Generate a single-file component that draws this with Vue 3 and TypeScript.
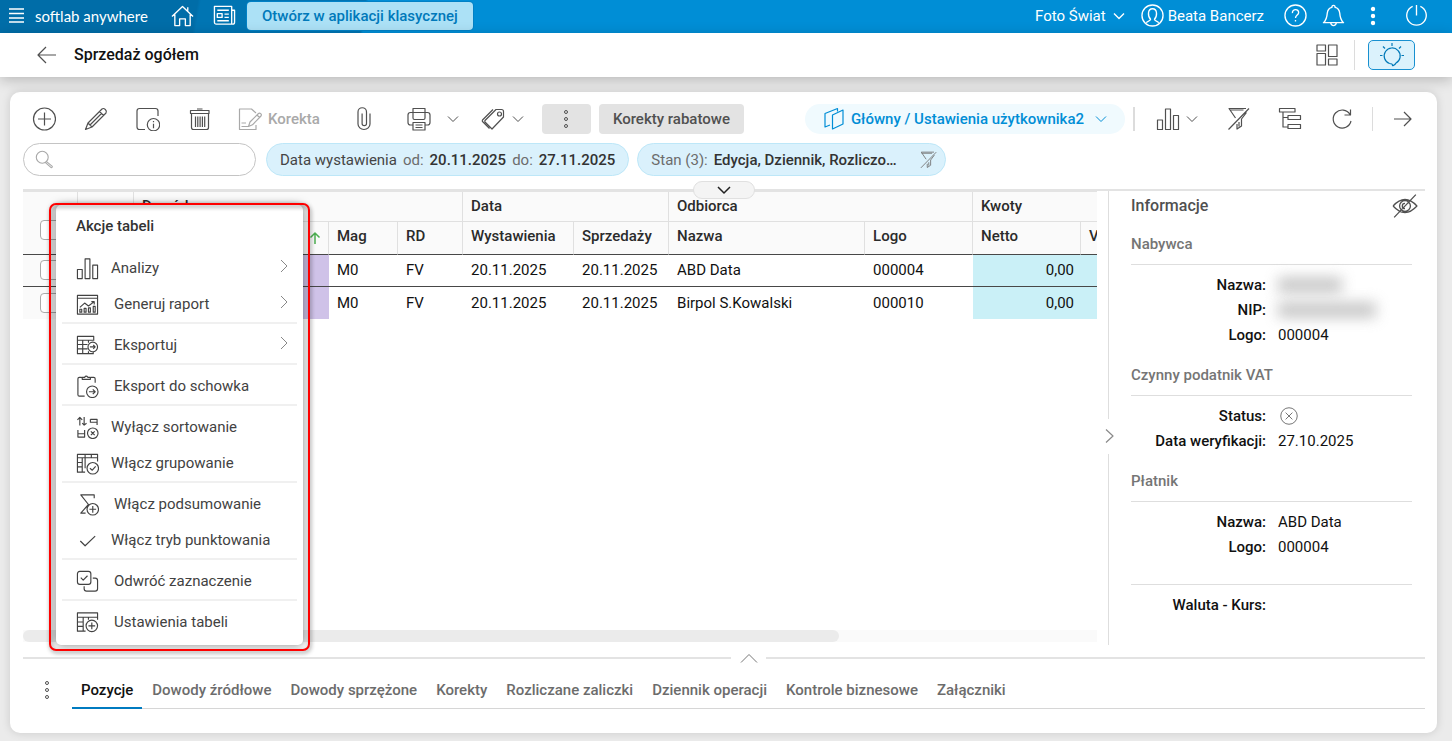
<script setup lang="ts">
import { ref } from 'vue'

interface MenuItem {
  label: string
  icon: string
  wide?: boolean
  submenu?: boolean
  divided?: boolean
}

interface InvoiceRow {
  store: string
  kind: string
  issued: string
  sold: string
  name: string
  logo: string
  net: string
}

const icons: Record<string, string> = {
  burger: 'M1 2h15M1 6.500h15M1 11h15M1 15h15',
  home: 'M1 13L12 2.500L23 13M4 11V22.500H9V15.500H15V22.500H20V11M17.500 7V3.500',
  news: 'M1.500 2.500H19.500V21H3.500Q1.500 21 1.500 19zM19.500 6.500H22.500V19Q22.500 21 20.500 21H18M4.500 6.500H16.500M4.500 10H9.500V14H4.500zM12 10.500H16.500M12 14H16.500M4.500 17.500H16.500',
  user: 'M12 1a11 11 0 1 0 0 22a11 11 0 0 0 0-22M5.500 19.500C6.500 17.500 10 18 10 16C7 13 6.500 5 12 5S17 13 14 16C14 18 17.500 17.500 18.500 19.500',
  help: 'M12 1a11 11 0 1 0 0 22a11 11 0 0 0 0-22M8.800 9.500C8.500 4.800 15.500 4.800 15.300 9C15.200 11.500 12 11.500 12 14.500M12 16.800v1.500',
  bell: 'M1.500 19.500Q5 16.500 5.500 9.500Q6.200 4.500 10.300 3.600Q10.300 1.500 12 1.500T13.700 3.600Q17.800 4.500 18.500 9.500Q19 16.500 22.500 19.500zM9 19.800Q9.500 22.500 12 22.500T15 19.800',
  power: 'M12 1v11M8 2.500A10.200 10.200 0 1 0 16 2.500',
  back: 'M21 12H3M11 4L3 12L11 20',
  forward: 'M3 12H20M13 5L20 12L13 19',
  layout: 'M2 2H10.500V8H2zM2 10.500H10.500V22H2zM13.500 2H22V13.500H13.500zM13.500 16H22V22H13.500z',
  bulb: 'M9.500 20.500Q13 20.500 12.500 23M12.500 23Q15.500 21.500 16 20A8 8 0 1 0 9.500 20.500M12 0V3M3 3.500L5 5.500M21 3.500L19 5.500M0 12.500H2.500M21.500 12.500H24',
  plus: 'M12.500 1a11 11 0 1 0 0 22a11 11 0 0 0 0-22M12.500 5.500v13M6 12h13',
  pencil: 'M1.500 22.500L4 16L18 2Q19.500 .800 21.300 2.500T22 6L8 20zM15.500 4.500L19.500 8.500M4 16L8 20M6 18L17.500 6.500',
  info: 'M22 9V4Q22 1.500 19.500 1.500H3.500Q1 1.500 1 4V20Q1 22.500 3.500 22.500H9M17.500 11.500a6.200 6.200 0 1 0 0 12.400a6.200 6.200 0 0 0 0-12.400M17.500 16.800v4.500M17.500 14v1.300',
  trash: 'M2.500 3.500H21V6.500H2.500zM9 2H14.500M3.500 6.500H20.500V20.500Q20.500 22.500 18.500 22.500H5.500Q3.500 22.500 3.500 20.500zM7.500 9.500V20M9.800 9.500V20M12.100 9.500V20M14.400 9.500V20M16.700 9.500V20',
  fix: 'M18 6L13.500 2H1.500V22.500H18V18M3.500 16H8M3.500 19.500H10M10.500 19.500L12 15L20.500 6.500Q21.500 5.500 22.700 6.600T23 9L14.500 17.800zM19 8L21.500 10.500',
  clip: 'M18 6.500V17a6 5.500 0 0 1-12 0V5a4 4 0 0 1 8.500 0V16.500a2.200 2.200 0 0 1-4.400 0V6.500',
  print: 'M6 5.500V1.500H18V5.500M6 5.500H3.500Q1 5.500 1 8V15.500Q1 18 3.500 18H6M18 5.500H20.500Q23 5.500 23 8V15.500Q23 18 20.500 18H18M6 5.500H18V11Q18 12.500 16.500 12.500H7.500Q6 12.500 6 11zM6 15.500H18V23H6zM8.500 18H15.500M8.500 20.500H15.500',
  tag: 'M15 2.500H20.500Q22.500 2.500 22.500 4.500V10L11 22L4 15Q3.500 14 4 13.500zM12 2.500L1.500 13Q1 14 1.500 14.500L8.500 21.500M18.500 5a2 2 0 1 0 0 4a2 2 0 0 0 0-4',
  views: 'M10.500 8L21 3V17L10.500 22zM15.500 4.500V1.500L3 6.500V20L8 18',
  bars: 'M1.500 13H6.500V22.500H1.500zM9.500 2H14.500V22.500H9.500zM17.500 8.500H22.500V22.500H17.500z',
  nofilter: 'M2.500 22.500L23 1.500M20 1.500H3L9.500 11M3.500 3H17.500M20.500 5.500L15.500 12V19L11 22V17M13 15V19.500',
  tree: 'M1.500 1.500H17V5H1.500zM5 5V20H10M5 10.500H10M10 8.500H22.500V12.500H10zM10 17.500H22.500V21.500H10z',
  refresh: 'M20 7.500A9 9 0 1 0 21 14M20.500 2.500V8H14.500',
  search: 'M9 2.500a6.500 6.500 0 1 0 0 13a6.500 6.500 0 0 0 0-13M13.700 13.700L20 19Q20.200 20.300 19 20.500L12.500 14.800',
  hide: 'M1 12Q12 0 23 12Q12 24 1 12M12 7a5 5 0 1 0 0 10a5 5 0 0 0 0-10M12 9.500a2.500 2.500 0 0 0 0 5M2 22.500L22 1.500',
  report: 'M1.500 2.500H22.500V22H1.500zM1.500 5.500H22.500M4 15L9 10.500L13 13.500L19 9M16 9H19V12M4 17h2v3h-2zM8.500 16h2v4h-2zM13 15.500h2v4.500h-2zM18 14h2v6h-2z',
  exportTable: 'M18.500 7V2.500H1.500V20.500H18V18.500M1.500 6.500H18.500M1.500 11H12M1.500 15.500H12M7 6.500V20.500M13 6.500V9M13 18V20.500M17.500 8.500a5 5 0 1 0 0 10a5 5 0 0 0 0-10M14.500 13.500H20M18 11.500L20 13.500L18 15.500',
  clipboard: 'M6 2.500H3.500Q2 2.500 2 4V20.500Q2 22 3.500 22H9M15.500 2.500H18.500Q20 2.500 20 4V8M6.500 4.500V2.500H9Q10.500 0 12.500 2.500H15V4.500zM17 11.500a6 6 0 1 0 0 12a6 6 0 0 0 0-12M13.500 17.500H20M17.500 15L20 17.500L17.500 20',
  nosort: 'M4 10V1.500M1.500 4L4 1.500L6.500 4M8.500 1V9.500M6.500 7.500L8.500 9.500L11 7.500M15 3.500H22V9.500M15 3.500V6.500H22M2 14.500V22H9V14.500M2 18.500H9M17.500 12.500a5.500 5.500 0 1 0 0 11a5.500 5.500 0 0 0 0-11M15.500 16L19.500 20M19.500 16L15.500 20',
  group: 'M22.500 10V2.500H1.500V21H9.500M1.500 6H22.500M6.500 6V21M1.500 11H6.500M1.500 15.500H6.500M9.500 6V17M9.500 2.500V6M16 2.500V6M17.500 11a6 6 0 1 0 0 12a6 6 0 0 0 0-12M14.500 17L17 19L20.500 15',
  sum: 'M19 5.500V2H5L13 12L5 21H10M17.500 11a6 6 0 1 0 0 12a6 6 0 0 0 0-12M17.500 13.500V20.500M14 17H21',
  check: 'M4.500 12.500L9.500 17.500L20 7.500',
  invert: 'M4 1.500H13Q15.500 1.500 15.500 4V12.500Q15.500 15 13 15H4Q1.500 15 1.500 12.500V4Q1.500 1.500 4 1.500M5 8L7.500 10.500L12 6M17.500 8.500H20Q22.500 8.500 22.500 11V19.500Q22.500 22 20 22H11Q8.500 22 8.500 19.500V17',
  tableSettings: 'M22.500 9V2H1.500V21H10M1.500 6.500H22.500M1.500 11.500H8M1.500 16H8M7.500 6.500V21M13 6.500V9M16.500 9.500a6 6 0 1 0 0 12a6 6 0 0 0 0-12M16.500 12V19M13 15.500H20',
  cross: 'M12 1a11 11 0 1 0 0 22a11 11 0 0 0 0-22M7.500 7.500l9 9M16.500 7.500l-9 9',
}

const menu: MenuItem[] = [
  { label: 'Analizy', icon: 'bars', submenu: true },
  { label: 'Generuj raport', icon: 'report', submenu: true, wide: true, divided: true },
  { label: 'Eksportuj', icon: 'exportTable', submenu: true, wide: true, divided: true },
  { label: 'Eksport do schowka', icon: 'clipboard', wide: true, divided: true },
  { label: 'Wyłącz sortowanie', icon: 'nosort' },
  { label: 'Włącz grupowanie', icon: 'group', divided: true },
  { label: 'Włącz podsumowanie', icon: 'sum', wide: true },
  { label: 'Włącz tryb punktowania', icon: 'check', divided: true },
  { label: 'Odwróć zaznaczenie', icon: 'invert', wide: true, divided: true },
  { label: 'Ustawienia tabeli', icon: 'tableSettings', wide: true },
]

const rows: InvoiceRow[] = [
  { store: 'M0', kind: 'FV', issued: '20.11.2025', sold: '20.11.2025', name: 'ABD Data', logo: '000004', net: '0,00' },
  { store: 'M0', kind: 'FV', issued: '20.11.2025', sold: '20.11.2025', name: 'Birpol S.Kowalski', logo: '000010', net: '0,00' },
]

const tabs = [
  'Pozycje', 'Dowody źródłowe', 'Dowody sprzężone', 'Korekty',
  'Rozliczane zaliczki', 'Dziennik operacji', 'Kontrole biznesowe', 'Załączniki',
]
const activeTab = ref('Pozycje')
const query = ref('')
</script>

<template>
  <div class="page">
    <header class="topbar">
      <button class="top-btn burger" aria-label="Menu"><svg viewBox="0 0 17 17"><path :d="icons.burger" /></svg></button>
      <span class="brand">softlab anywhere</span>
      <button class="top-btn home" aria-label="Start"><svg viewBox="0 0 24 24"><path :d="icons.home" /></svg></button>
      <button class="top-btn news" aria-label="Aktualności"><svg viewBox="0 0 24 24"><path :d="icons.news" /></svg></button>
      <button class="classic">Otwórz w aplikacji klasycznej</button>
      <div class="top-right">
        <button class="top-btn company">Foto Świat<svg class="chev" viewBox="0 0 12 12"><path d="M1 3.500l5 5 5-5" /></svg></button>
        <button class="top-btn account"><svg viewBox="0 0 24 24"><path :d="icons.user" /></svg>Beata Bancerz</button>
        <button class="top-btn help" aria-label="Pomoc"><svg viewBox="0 0 24 24"><path :d="icons.help" /></svg></button>
        <button class="top-btn bell" aria-label="Powiadomienia"><svg viewBox="0 0 24 24"><path :d="icons.bell" /></svg></button>
        <button class="top-btn more" aria-label="Więcej"><svg class="dots solid" viewBox="0 0 6 20"><circle cx="3" cy="3" r="1.500" /><circle cx="3" cy="10" r="1.500" /><circle cx="3" cy="17" r="1.500" /></svg></button>
        <button class="top-btn" aria-label="Wyloguj"><svg viewBox="0 0 24 24"><path :d="icons.power" /></svg></button>
      </div>
    </header>

    <div class="titlebar">
      <button class="icon-btn back" aria-label="Wstecz"><svg viewBox="0 0 24 24"><path :d="icons.back" /></svg></button>
      <h1>Sprzedaż ogółem</h1>
      <button class="icon-btn layout" aria-label="Układ"><svg viewBox="0 0 24 24"><path :d="icons.layout" /></svg></button>
      <span class="sep title-sep"></span>
      <button class="hint" aria-label="Podpowiedzi"><svg viewBox="0 0 24 24"><path :d="icons.bulb" /></svg></button>
    </div>

    <main class="card">
      <div class="toolbar">
        <div class="tools">
          <button class="icon-btn" aria-label="Dodaj"><svg viewBox="0 0 24 24"><path :d="icons.plus" /></svg></button>
          <button class="icon-btn" aria-label="Edytuj"><svg viewBox="0 0 24 24"><path :d="icons.pencil" /></svg></button>
          <button class="icon-btn" aria-label="Podgląd"><svg viewBox="0 0 24 24"><path :d="icons.info" /></svg></button>
          <button class="icon-btn" aria-label="Usuń"><svg viewBox="0 0 24 24"><path :d="icons.trash" /></svg></button>
        </div>
        <button class="icon-btn fix" disabled><svg viewBox="0 0 24 24"><path :d="icons.fix" /></svg>Korekta</button>
        <button class="icon-btn clip" aria-label="Załącznik"><svg viewBox="0 0 24 24"><path :d="icons.clip" /></svg></button>
        <button class="icon-btn split print" aria-label="Drukuj"><svg viewBox="0 0 24 24"><path :d="icons.print" /></svg><svg class="chev" viewBox="0 0 12 12"><path d="M1 3.500l5 5 5-5" /></svg></button>
        <button class="icon-btn split tag" aria-label="Etykiety"><svg viewBox="0 0 24 24"><path :d="icons.tag" /></svg><svg class="chev" viewBox="0 0 12 12"><path d="M1 3.500l5 5 5-5" /></svg></button>
        <button class="gray-btn kebab" aria-label="Więcej akcji"><svg class="dots" viewBox="0 0 6 20"><circle cx="3" cy="3" r="1.500" /><circle cx="3" cy="10" r="1.500" /><circle cx="3" cy="17" r="1.500" /></svg></button>
        <button class="gray-btn">Korekty rabatowe</button>
        <div class="tools-right">
          <button class="view"><svg viewBox="0 0 24 24"><path :d="icons.views" /></svg>Główny / Ustawienia użytkownika2<svg class="chev" viewBox="0 0 12 12"><path d="M1 3.500l5 5 5-5" /></svg></button>
          <span class="sep view-sep"></span>
          <button class="icon-btn split charts" aria-label="Analizy"><svg viewBox="0 0 24 24"><path :d="icons.bars" /></svg><svg class="chev" viewBox="0 0 12 12"><path d="M1 3.500l5 5 5-5" /></svg></button>
          <button class="icon-btn" aria-label="Wyczyść filtry"><svg viewBox="0 0 24 24"><path :d="icons.nofilter" /></svg></button>
          <button class="icon-btn" aria-label="Drzewo"><svg viewBox="0 0 24 24"><path :d="icons.tree" /></svg></button>
          <button class="icon-btn" aria-label="Odśwież"><svg viewBox="0 0 24 24"><path :d="icons.refresh" /></svg></button>
          <span class="sep end-sep"></span>
          <button class="icon-btn next" aria-label="Dalej"><svg viewBox="0 0 24 24"><path :d="icons.forward" /></svg></button>
        </div>
      </div>

      <div class="filters">
        <label class="search">
          <svg viewBox="0 0 24 24"><path :d="icons.search" /></svg>
          <input v-model="query" type="text" aria-label="Szukaj" />
        </label>
        <button class="pill">Data wystawienia<i>od:</i><b>20.11.2025</b><i>do:</i><b>27.11.2025</b></button>
        <button class="pill state"><i>Stan (3):</i><b>Edycja, Dziennik, Rozliczo…</b><svg viewBox="0 0 24 24"><path :d="icons.nofilter" /></svg></button>
      </div>

      <div class="divider">
        <button class="expand" aria-label="Rozwiń filtry"><svg viewBox="0 0 16 12"><path d="M2 3l6 6 6-6" /></svg></button>
      </div>

      <div class="content">
        <section class="grid-area">
          <div class="grid-clip">
            <table>
              <colgroup>
                <col class="w55" /><col class="w56" /><col class="w195" /><col class="w69" /><col class="w65" /><col class="w111" />
                <col class="w95" /><col class="w196" /><col class="w108" /><col class="w108" /><col class="w108" />
              </colgroup>
              <thead>
                <tr class="groups">
                  <th rowspan="2" class="pick"><input type="checkbox" aria-label="Zaznacz wszystko" /></th>
                  <th rowspan="2"></th>
                  <th colspan="3">Dowód</th>
                  <th colspan="2">Data</th>
                  <th colspan="2">Odbiorca</th>
                  <th colspan="2">Kwoty</th>
                </tr>
                <tr class="names">
                  <th class="sorted"><svg viewBox="0 0 12 12"><path d="M6 12V1M1.500 5.500L6 1L10.500 5.500" /></svg></th>
                  <th>Mag</th><th>RD</th><th>Wystawienia</th><th>Sprzedaży</th><th>Nazwa</th><th>Logo</th><th>Netto</th><th>VAT</th>
                </tr>
              </thead>
              <tbody>
                <tr v-for="row in rows" :key="row.logo">
                  <td class="pick"><input type="checkbox" :aria-label="row.name" /></td>
                  <td></td>
                  <td class="violet"></td>
                  <td>{{ row.store }}</td>
                  <td>{{ row.kind }}</td>
                  <td>{{ row.issued }}</td>
                  <td>{{ row.sold }}</td>
                  <td>{{ row.name }}</td>
                  <td>{{ row.logo }}</td>
                  <td class="money">{{ row.net }}</td>
                  <td class="money"></td>
                </tr>
              </tbody>
            </table>
          </div>
          <div class="scroll"><div class="thumb"></div></div>
        </section>

        <div class="rail">
          <button aria-label="Zwiń panel"><svg viewBox="0 0 10 16"><path d="M1 1.500l7 6.500-7 6.500" /></svg></button>
        </div>

        <aside class="details">
          <div class="details-head">
            <h2>Informacje</h2>
            <button class="icon-btn" aria-label="Ukryj"><svg class="eye" viewBox="0 0 24 24"><path :d="icons.hide" /></svg></button>
          </div>
          <h3>Nabywca</h3>
          <dl>
            <dt>Nazwa:</dt><dd><span class="redacted"></span></dd>
            <dt>NIP:</dt><dd><span class="redacted long"></span></dd>
            <dt>Logo:</dt><dd>000004</dd>
          </dl>
          <h3>Czynny podatnik VAT</h3>
          <dl>
            <dt>Status:</dt><dd><svg class="status" viewBox="0 0 24 24"><path :d="icons.cross" /></svg></dd>
            <dt>Data weryfikacji:</dt><dd>27.10.2025</dd>
          </dl>
          <h3>Płatnik</h3>
          <dl>
            <dt>Nazwa:</dt><dd>ABD Data</dd>
            <dt>Logo:</dt><dd>000004</dd>
          </dl>
          <dl class="ruled">
            <dt>Waluta - Kurs:</dt><dd></dd>
          </dl>
        </aside>
      </div>

      <div class="splitter">
        <span class="line left"></span>
        <button aria-label="Rozwiń"><svg viewBox="0 0 18 12"><path d="M1 10.500l8-8 8 8" /></svg></button>
        <span class="line right"></span>
      </div>

      <div class="bottom">
        <button class="icon-btn tab-more" aria-label="Więcej zakładek"><svg class="dots" viewBox="0 0 6 20"><circle cx="3" cy="3" r="1.500" /><circle cx="3" cy="10" r="1.500" /><circle cx="3" cy="17" r="1.500" /></svg></button>
        <nav class="tabs" role="tablist">
          <button v-for="t in tabs" :key="t" role="tab" :aria-selected="t === activeTab" :class="{ active: t === activeTab }" @click="activeTab = t">{{ t }}</button>
        </nav>
      </div>
    </main>

    <div class="popup">
      <div class="menu">
        <h2>Akcje tabeli</h2>
        <ul>
          <li v-for="m in menu" :key="m.label" :class="{ divided: m.divided }">
            <button :class="{ wide: m.wide }">
              <svg viewBox="0 0 24 24"><path :d="icons[m.icon]" /></svg>
              <span>{{ m.label }}</span>
              <svg v-if="m.submenu" class="sub" viewBox="0 0 8 14"><path d="M1 1l6 6-6 6" /></svg>
            </button>
          </li>
        </ul>
      </div>
      <div class="frame"></div>
    </div>
  </div>
</template>

<style>
html, body { margin: 0; background: #ebebeb; }
</style>

<style scoped>
.page { position: relative; display: flex; flex-direction: column; min-height: 100vh; font: 15px/20px Roboto, "Liberation Sans", sans-serif; color: #212121; overflow: hidden; }
* { box-sizing: border-box; }
button { font: inherit; color: inherit; background: none; border: 0; padding: 0; margin: 0; display: flex; align-items: center; white-space: nowrap; cursor: pointer; }
svg { display: block; flex: none; width: 24px; height: 24px; fill: none; stroke: currentColor; stroke-width: 1.2; stroke-linejoin: round; }
h1, h2, h3, ul, dl, dd { margin: 0; padding: 0; }
h1, h2, h3 { font-weight: 500; }
.chev { width: 12px; height: 12px; stroke-width: 1; }
.dots { width: 6px; height: 20px; stroke-width: 1; }
.dots.solid { fill: #fff; }
.sep { width: 1px; background: #dcdcdc; }

.topbar { display: flex; align-items: center; height: 33px; padding: 0 24px 2px 8px; color: #fff; background: linear-gradient(100deg, #006da8 0 195px, #0075b3 198px 360px, #008ed6 363px); }
.top-btn svg { width: 23px; height: 23px; stroke-width: 1.4; }
.burger svg { width: 17px; height: 17px; stroke-width: 1.5; }
.brand { font: 15px/20px Lato, "Open Sans", sans-serif; margin: 0 20px 0 10px; width: 116px; white-space: nowrap; }
.news { margin: 0 11px 0 19px; }
.classic { height: 28px; padding: 0 15px; border-radius: 4px; background: #ace1f6; color: #0079ba; font-weight: 500; box-shadow: 0 0 0 1px #0081c6; }
.top-right { display: flex; align-items: center; margin-left: auto; }
.top-btn.company .chev { width: 12px; height: 12px; margin-left: 7px; }
.account { gap: 4px; margin: 0 20px 0 16px; }
.help { margin-right: 15px; }
.bell { margin-right: 25px; }
.more { margin-right: 29px; }
.top-btn .dots { width: 6px; height: 20px; }

.titlebar { position: relative; display: flex; align-items: center; height: 44px; padding: 0 37px 0 35px; background: #fff; box-shadow: 0 3px 14px rgba(0, 0, 0, .22); }
.titlebar h1 { font-size: 16px; color: #111; margin-left: 15px; }
.icon-btn { color: #505050; }
.layout { margin-left: auto; }
.title-sep { height: 30px; margin: 0 13px 0 15px; }
.hint { width: 47px; height: 30px; justify-content: center; border: 1px solid #1890d0; border-radius: 5px; background: #dbf2fc; color: #0079b8; }

.card { display: flex; flex-direction: column; flex: 1; margin: 15px 15px 8px 10px; padding: 12px 12px 24px 13px; background: #fff; border-radius: 10px; box-shadow: 0 0 10px rgba(0, 0, 0, .14); }
.toolbar { display: flex; align-items: center; height: 30px; padding-left: 9px; color: #505050; }
.tools { display: flex; gap: 28px; margin-right: 26px; }
.fix { gap: 6px; color: #a9a9a9; font-weight: 500; margin-right: 32px; }
.fix:disabled { cursor: default; }
.clip { margin-right: 31px; }
.split { gap: 16px; }
.print { margin-right: 22px; }
.tag { gap: 7px; margin-right: 18px; }
.gray-btn { height: 30px; padding: 0 14px; border-radius: 4px; background: #e3e3e3; color: #505050; font-weight: 500; }
.kebab { width: 49px; justify-content: center; margin-right: 8px; }
.tools-right { display: flex; align-items: center; gap: 28px; margin-left: auto; margin-right: 10px; }
.view { height: 30px; padding: 0 18px 0 17px; border-radius: 15px; background: #f0fafe; color: #008ed6; font-weight: 500; }
.view > svg:first-child { margin-right: 5px; }
.view .chev { margin-left: 11px; }
.view-sep { width: 2px; height: 24px; margin: 0 -7px 0 -20px; }
.charts { gap: 6px; }
.end-sep { height: 24px; margin: 0 -10px; }

.filters { display: flex; gap: 8px; height: 33px; margin-top: 9px; }
.search { display: flex; align-items: center; width: 233px; margin-right: 2px; padding: 0 12px 0 10px; border: 1px solid #c4c4c4; border-radius: 17px; color: #a8a8a8; }
.search svg { width: 22px; height: 22px; }
.search input { flex: 1; min-width: 0; border: 0; outline: 0; background: none; font: inherit; color: #333; }
.pill { gap: 6px; padding: 0 13px; border: 1px solid #bde7f8; border-radius: 17px; background: #daf1fc; color: #454545; }
.pill i { font-style: normal; color: #6c6c6c; }
.pill b { font-weight: 500; color: #333; }
.pill.state { padding: 0 7px 0 13px; }
.pill.state svg { width: 18px; height: 18px; color: #777; margin: 0 1px 0 16px; }

.divider { display: flex; justify-content: center; align-items: center; height: 2px; margin-top: 13px; background: #e3e3e3; }
.expand { position: relative; z-index: 1; flex: none; width: 62px; height: 18px; justify-content: center; border: 1px solid #e0e0e0; border-radius: 9px; background: #f4f4f4; color: #222; }
.expand svg { width: 16px; height: 12px; stroke-width: 1.5; }

.content { display: flex; flex: 1; }
.grid-area { display: flex; flex-direction: column; flex: 1; min-width: 0; padding-bottom: 3px; border-top: 1px solid #e3e3e3; }
.grid-clip { flex: 1; overflow: hidden; }
table { table-layout: fixed; width: 1166px; border-collapse: separate; border-spacing: 0; }
.w55 { width: 55px; } .w56 { width: 56px; } .w195 { width: 195px; } .w69 { width: 69px; } .w65 { width: 65px; } .w111 { width: 111px; }
.w95 { width: 95px; } .w196 { width: 196px; } .w108 { width: 108px; }
th, td { padding: 0 8px; text-align: left; white-space: nowrap; font-weight: 400; }
th { font-weight: 500; color: #2b2b2b; background: #fafafa; border-right: 1px solid #e0e0e0; }
.groups th { height: 30px; padding-bottom: 2px; border-bottom: 1px solid #e0e0e0; }
.names th { height: 33px; padding-bottom: 4px; border-bottom: 1px solid #484848; }
.groups th[rowspan] { border-bottom-color: #484848; }
td { height: 32px; color: #111; }
tbody tr:first-child td { padding-bottom: 1px; border-bottom: 1px solid #484848; }
td:first-child { background: #fafafa; }
.pick { padding-left: 17px; }
.pick input { display: block; appearance: none; width: 20px; height: 20px; margin: 0; border: 1px solid #aaa; border-radius: 4px; background: #fff; }
.groups .pick { padding-top: 16px; }
.sorted svg { width: 12px; height: 12px; margin-left: auto; color: #4caf50; stroke-width: 1.5; }
.names .sorted { padding: 0 7px 0 8px; }
.violet { background: #cfc2e8; }
.money { background: #caf0f7; text-align: right; padding-right: 7px; }
.scroll { height: 12px; background: #fafafa; }
.thumb { width: 76%; height: 12px; border-radius: 6px; background: #ebebeb; }

.rail { display: flex; align-items: center; width: 1px; margin-left: 11px; padding-top: 36px; background: #dedede; }
.rail button { position: relative; flex: none; margin-left: -4px; width: 12px; height: 35px; background: #fff; color: #8a8a8a; justify-content: center; }
.rail svg { width: 10px; height: 16px; }

.details { width: 316px; padding: 0 13px 0 22px; }
.details-head { display: flex; align-items: center; justify-content: space-between; height: 29px; margin: 0 -6px 14px 0; }
.details h2 { font-size: 16px; color: #505050; }
.eye { width: 26px; height: 26px; }
.details h3 { font-size: 15px; color: #757575; padding-bottom: 10px; border-bottom: 1px solid #dedede; }
dl { display: grid; grid-template-columns: 135px 1fr; column-gap: 12px; padding-top: 7px; margin-bottom: 18px; grid-auto-rows: 25px; align-items: center; color: #111; }
dt { text-align: right; font-weight: 500; }
.ruled { margin: 25px 0 0; border-top: 1px solid #dedede; }
.redacted { display: block; width: 64px; height: 16px; background: #bbb; filter: blur(7px); opacity: .8; }
.redacted.long { width: 98px; }
.status { width: 18px; height: 18px; margin-left: 2px; color: #666; }

.splitter { display: flex; align-items: center; height: 25px; }
.line { height: 2px; background: #e3e3e3; }
.line.left { flex: 708; }
.line.right { flex: 659; }
.splitter button { width: 35px; justify-content: center; color: #777; }
.splitter svg { width: 18px; height: 12px; stroke-width: 1; }

.bottom { display: flex; height: 39px; }
.tab-more { width: 48px; margin-right: 1px; justify-content: center; }
.tabs { display: flex; flex: 1; gap: 1px; border-bottom: 1px solid #d6d6d6; }
.tabs button { height: 39px; padding: 0 9px; font-weight: 500; color: #6c6c6c; border-bottom: 2px solid transparent; border-top: 2px solid transparent; }
.tabs .active { color: #111; border-bottom-color: #007bc0; }

.popup { position: absolute; left: 49px; top: 203px; width: 261px; height: 448px; }
.menu { margin: 2px 7px 0 7px; height: 440px; border-radius: 5px; background: #fff; box-shadow: 0 0 9px rgba(0, 0, 0, .5); padding: 11px 6px 0; }
.menu h2 { font-size: 15px; margin-left: 14px; height: 34px; color: #333; }
.menu ul { list-style: none; }
.menu li.divided { border-bottom: 2px solid #f0f0f0; margin-bottom: 3px; }
.menu li button { width: 100%; height: 36px; padding: 0 9px 0 14px; color: #424242; }
.menu li svg { width: 23px; height: 23px; }
.menu li span { flex: 1; text-align: left; margin-left: 12px; }
.menu li .wide span { margin-left: 15px; }
.menu li .sub { width: 8px; height: 14px; margin-bottom: 4px; color: #888; stroke-width: 1; }
.frame { position: absolute; inset: 0; border: 2px solid #f00; border-radius: 7px; filter: drop-shadow(1px 2px 2px rgba(0, 0, 0, .45)); pointer-events: none; }
</style>
